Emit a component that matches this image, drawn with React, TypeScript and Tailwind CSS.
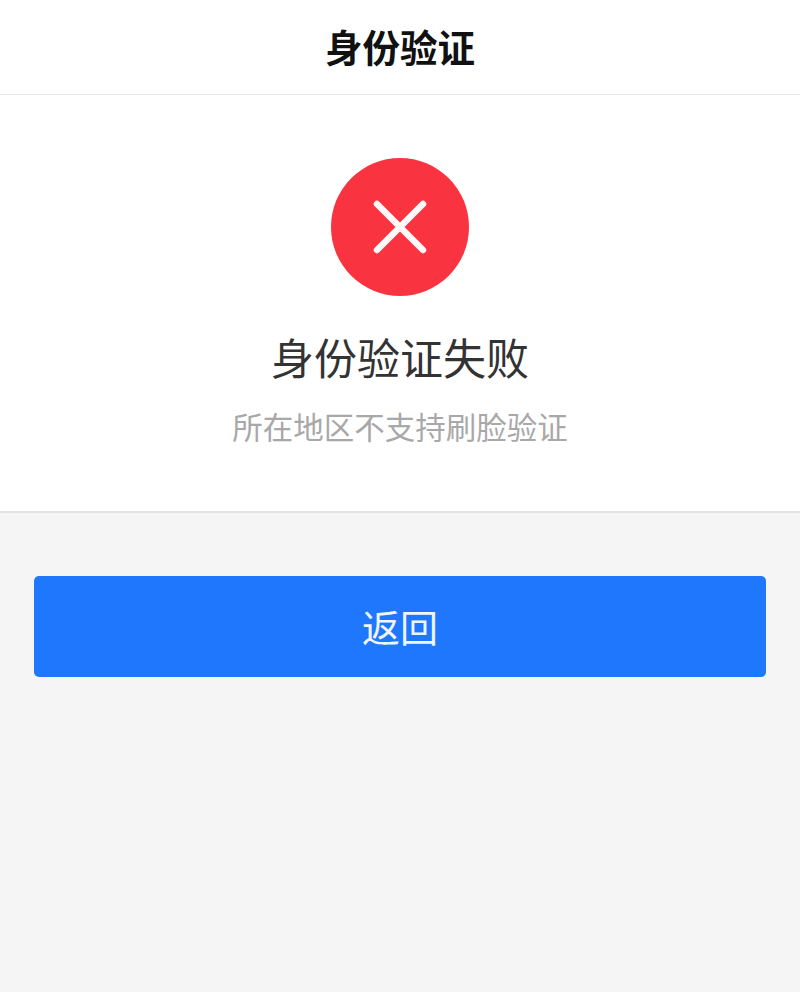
const cjk = "font-['Noto_Sans_CJK_SC','Noto_Sans',sans-serif]";

export default function App() {
  return (
    <main className={`flex h-[992px] w-[800px] flex-col bg-[#f5f5f5] ${cjk}`}>
      <header className="flex h-[95px] items-center justify-center border-b border-[#e6e6e6] bg-white pb-[3px]">
        <h1 className="text-[37.5px] font-bold leading-none text-[#111111]">身份验证</h1>
      </header>
      <section className="flex h-[418px] flex-col items-center border-b-2 border-[#e2e2e2] bg-white pt-[63px]">
        <div className="flex h-[138px] w-[138px] items-center justify-center rounded-full bg-[#f9333f]">
          <svg width="56" height="56" viewBox="0 0 56 56" fill="none">
            <path d="M5 5 L51 51 M51 5 L5 51" stroke="#fff8f8" strokeWidth="6.5" strokeLinecap="round" />
          </svg>
        </div>
        <h2 className="mt-[30px] text-[43px] leading-[60px] text-[#333333]">身份验证失败</h2>
        <p className="mt-[18px] text-[30.5px] leading-[44px] text-[#a8a8a8]">所在地区不支持刷脸验证</p>
      </section>
      <div className="px-[34px] pt-[63px]">
        <button className="flex h-[101px] w-full items-center justify-center rounded-[5px] bg-[#1e77fc] pb-[3px] text-[38px] text-[#eef5ff]">
          返回
        </button>
      </div>
    </main>
  );
}
